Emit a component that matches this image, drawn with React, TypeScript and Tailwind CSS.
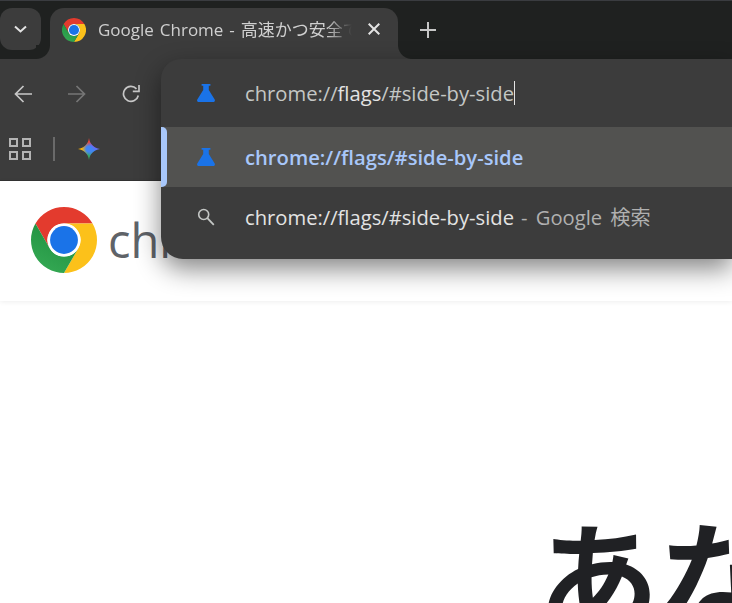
const uiFont = "font-['Open_Sans','Noto_Sans_CJK_JP',sans-serif]"

function ChromeLogo({ size, id }: { size: number; id: string }) {
  const red = "M32 0A32 32 0 0 1 59.7 16H32A16 16 0 0 0 18.1 40L4.3 16A32 32 0 0 1 32 0Z"
  return (
    <svg width={size} height={size} viewBox="0 0 64 64">
      <defs>
        <linearGradient id={id + "g"} x1="0" y1="0.2" x2="0.7" y2="1">
          <stop offset="0" stopColor="#34a853" />
          <stop offset="1" stopColor="#1e8e3e" />
        </linearGradient>
      </defs>
      <path d={red} fill="#e33b2e" />
      <path d={red} fill="#fcc11a" transform="rotate(120 32 32)" />
      <path d={red} fill={`url(#${id}g)`} transform="rotate(240 32 32)" />
      <circle cx="32" cy="32" r="16" fill="#fff" />
      <circle cx="32" cy="32" r="13.5" fill="#1a73e8" />
    </svg>
  )
}

function Flask() {
  return (
    <svg width="18" height="18" viewBox="0 0 18 18">
      <path d="M4.600 0h8.800v1.700h-1.600v4.200l5.900 9.600c.6 1.100 0 2.500-1.400 2.500H1.700C.3 18-.3 16.600.3 15.500l5.900-9.600V1.700H4.600Z" fill="#1a73e8" />
    </svg>
  )
}

function GeminiStar() {
  return (
    <svg width="22" height="22" viewBox="0 0 22 22">
      <defs>
        <clipPath id="gemClip">
          <path d="M11 0C11.800 6 16 10.200 22 11 16 11.800 11.800 16 11 22 10.200 16 6 11.800 0 11 6 10.200 10.200 6 11 0Z" />
        </clipPath>
      </defs>
      <g clipPath="url(#gemClip)">
        <foreignObject x="0" y="0" width="22" height="22">
          <div className="w-[22px] h-[22px] bg-[radial-gradient(circle,#4285f4_18%,transparent_45%),conic-gradient(#ea4335,#a142f4_45deg,#4285f4_110deg,#34a853_190deg,#fbbc04_250deg,#f9ab00_280deg,#ea4335)]" />
        </foreignObject>
      </g>
    </svg>
  )
}

function SearchIcon() {
  return (
    <svg width="18" height="18" viewBox="0 0 18 18" fill="none" stroke="#c4c7c5" strokeWidth="1.600">
      <circle cx="6.700" cy="6.500" r="5" />
      <path d="M10.400 10.200 16.800 16.800" strokeWidth="1.800" />
    </svg>
  )
}

function BackIcon({ flip, color }: { flip?: boolean; color: string }) {
  return (
    <svg width="18" height="18" viewBox="0 0 18 18" fill="none" stroke={color} strokeWidth="1.700" className={flip ? "-scale-x-100" : ""}>
      <path d="M18 9H1.500M9.500 1 1.500 9l8 8" />
    </svg>
  )
}

function ReloadIcon() {
  return (
    <svg width="18" height="18" viewBox="0 0 18 18" fill="none" stroke="#c7c7c7" strokeWidth="1.700">
      <path d="M16.300 10.500A7.500 7.500 0 1 1 14.500 3.800" />
      <path d="M17 0v6.300H10.800" />
    </svg>
  )
}

function AppsIcon() {
  return (
    <div className="grid grid-cols-2 gap-[4px]">
      {[0, 1, 2, 3].map((i) => (
        <span key={i} className="w-[9px] h-[9px] border-2 border-[#b4b4b4]" />
      ))}
    </div>
  )
}

function Chevron() {
  return (
    <svg width="13" height="8" viewBox="0 0 13 8" fill="none" stroke="#e3e3e3" strokeWidth="2">
      <path d="M1 1.500 6.500 6.500 12 1.500" />
    </svg>
  )
}

function TabStrip() {
  return (
    <div className="h-[59px] bg-[#1f2120] border-t border-[#3a3c40] flex items-start pt-[7px]">
      <button className="w-[41px] h-[42px] rounded-[12px] bg-[#3c3c3c] flex items-center justify-center pr-[1px]">
        <Chevron />
      </button>
      <div className={`relative ml-[9px] w-[348px] h-[51px] bg-[#3c3c3c] rounded-t-[14px] flex items-start pt-[10px] pl-[12px] ${uiFont}`}>
        <span className="absolute -left-[14px] bottom-0 w-[14px] h-[14px] bg-[radial-gradient(circle_at_0_0,#1f2120_13.5px,#3c3c3c_14.5px)]" />
        <span className="absolute -right-[14px] bottom-0 w-[14px] h-[14px] bg-[radial-gradient(circle_at_100%_0,#1f2120_13.5px,#3c3c3c_14.5px)]" />
        <ChromeLogo size={24} id="fav" />
        <span className="ml-[12px] mt-[1px] w-[254px] overflow-hidden whitespace-nowrap text-[17px] leading-[22px] [word-spacing:1.5px] text-[#cfcfcf] [mask-image:linear-gradient(to_right,black_90%,transparent)]">
          Google Chrome - 高速かつ安全で
        </span>
        <svg className="ml-[16px] mt-[5px]" width="12" height="12" viewBox="0 0 12 12" stroke="#e3e3e3" strokeWidth="2">
          <path d="M.7.700 11.300 11.300M11.300.700 .7 11.300" />
        </svg>
      </div>
      <svg className="ml-[22px] mt-[14px]" width="16" height="16" viewBox="0 0 16 16" stroke="#c7c7c7" strokeWidth="2">
        <path d="M8 0V16M0 8H16" />
      </svg>
    </div>
  )
}

function Toolbar() {
  return (
    <div className="h-[122px] bg-[#3c3c3c] border-b border-[#333333]">
      <div className="h-[70px] flex items-center pl-[14px] gap-[36px]">
        <BackIcon color="#c7c7c7" />
        <BackIcon flip color="#767676" />
        <ReloadIcon />
      </div>
      <div className="h-[40px] flex items-center pl-[9px]">
        <AppsIcon />
        <span className="ml-[22px] w-[2px] h-[24px] bg-[#6a6a6a]" />
        <span className="ml-[23px] flex"><GeminiStar /></span>
      </div>
    </div>
  )
}

function Omnibox() {
  return (
    <div className={`absolute left-[161px] top-[59px] w-[571px] h-[200px] bg-[#3c3c3c] rounded-tl-[20px] rounded-bl-[22px] shadow-[0_10px_26px_rgba(0,0,0,0.48)] ${uiFont}`}>
      <div className="h-[68px] flex items-center pl-[36px]">
        <Flask />
        <span className="ml-[30px] text-[20.2px] text-[#c4c7c5] leading-[24px]">chrome://<span className="text-[#e3e3e3]">flags</span>/#side-by-side</span>
        <span className="w-px h-[24px] bg-[#e3e3e3]" />
      </div>
      <div className="relative h-[60px] bg-[#525250] flex items-center pl-[36px]">
        <span className="absolute left-0 top-0 w-[6px] h-[60px] bg-[#a8c7fa] rounded-r-[5px]" />
        <Flask />
        <span className="ml-[30px] text-[20.2px] font-semibold text-[#a8c7fa] leading-[24px]">chrome://flags/#side-by-side</span>
      </div>
      <div className="h-[60px] flex items-center pl-[36px]">
        <SearchIcon />
        <span className="ml-[30px] text-[20.2px] text-[#e3e3e3] leading-[24px]">chrome://flags/#side-by-side<span className="ml-[7px] text-[#b0b0b0] [word-spacing:3px]">- Google 検索</span></span>
      </div>
    </div>
  )
}

export default function App() {
  return (
    <div className="relative w-[732px] h-[603px] overflow-hidden bg-white">
      <TabStrip />
      <Toolbar />
      <header className="h-[120px] bg-white shadow-[0_1px_5px_rgba(0,0,0,0.07)] flex items-center pl-[31px] pb-[2px]">
        <ChromeLogo size={66} id="hero" />
        <span className="ml-[11px] text-[47px] leading-[56px] text-[#5f6368] font-['Open_Sans',sans-serif]">chrome</span>
      </header>
      <main className="pt-[201px] pl-[537px]">
        <h1 className="whitespace-nowrap text-[122px] leading-[140px] font-bold text-[#202124] font-['Noto_Sans_CJK_JP',sans-serif]">あなた</h1>
      </main>
      <Omnibox />
    </div>
  )
}
